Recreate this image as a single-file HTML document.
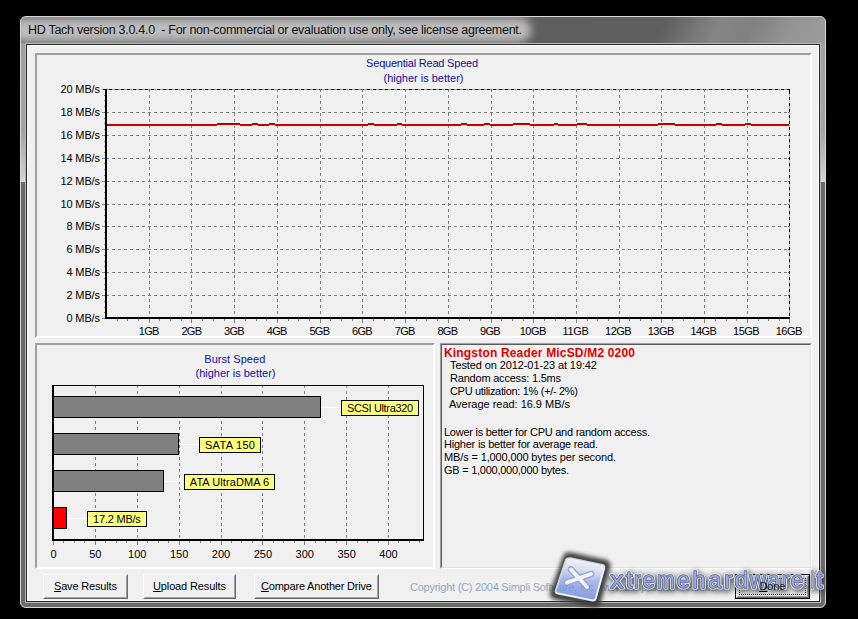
<!DOCTYPE html>
<html><head><meta charset="utf-8"><style>
html,body{margin:0;padding:0;}
body{width:858px;height:619px;background:#000;position:relative;overflow:hidden;font-family:"Liberation Sans",sans-serif;}
div{position:absolute;box-sizing:content-box;}
.t{white-space:pre;}
</style></head><body>
<div style="left:20px;top:16px;width:806px;height:592px;border-radius:6px;background:#6a6a6a;"></div>
<div style="left:21px;top:17px;width:804px;height:165px;border-radius:5px 5px 0 0;background:linear-gradient(180deg,#a0a0a0 0%,#a4a4a4 70%,#cfcfcf 97%,#d8d8d8 100%);"></div>
<div style="left:21px;top:17px;width:804px;height:26px;border-radius:5px 5px 0 0;overflow:hidden;background:linear-gradient(115deg,#606060 0%,#5e5e5e 79%,#858585 86%,#808080 90%,#949494 95%,#9c9c9c 100%);"><div style="left:-6px;top:0px;width:516px;height:26px;border-radius:8px 14px 14px 8px;background:linear-gradient(180deg,#a8a8a8 0%,#c4c4c4 45%,#bdbdbd 70%,#a2a2a2 100%);filter:blur(4px);"></div></div>
<div style="left:20px;top:16px;width:804px;height:590px;border-radius:6px;border:1px solid rgba(235,235,235,0.85);"></div>
<div style="left:25px;top:43px;width:794px;height:558px;border:1px solid #b8b8b8;"></div>
<div style="left:26px;top:44px;width:792px;height:556px;border:1px solid #2b2b2b;"></div>
<div style="left:27px;top:45px;width:790px;height:554px;border:1px solid #fff;background:#f0f0f0;"></div>
<div class="t" style="top:24.22px;font-size:12.5px;line-height:12.5px;color:#101010;letter-spacing:-0.277px;left:28px;">HD Tach version 3.0.4.0&nbsp; - For non-commercial or evaluation use only, see license agreement.</div>
<div style="left:35px;top:53px;width:773px;height:281px;border-style:solid;border-width:2px;border-color:#a0a0a0 #fff #fff #a0a0a0;"></div>
<div class="t" style="top:58.26px;font-size:11px;line-height:11px;color:#1010a0;letter-spacing:-0.211px;left:221.99px;width:400px;text-align:center;">Sequential Read Speed</div>
<div class="t" style="top:72.76px;font-size:11px;line-height:11px;color:#1010a0;letter-spacing:-0.006px;left:223.50px;width:400px;text-align:center;">(higher is better)</div>
<div style="left:102px;top:295px;width:3px;height:1px;background:#808080"></div>
<div style="left:107px;top:295px;width:682px;height:1px;background:repeating-linear-gradient(90deg,#808080 0 3px,transparent 3px 6px);background-position:-1px 0"></div>
<div style="left:102px;top:272px;width:3px;height:1px;background:#808080"></div>
<div style="left:107px;top:272px;width:682px;height:1px;background:repeating-linear-gradient(90deg,#808080 0 3px,transparent 3px 6px);background-position:-1px 0"></div>
<div style="left:102px;top:249px;width:3px;height:1px;background:#808080"></div>
<div style="left:107px;top:249px;width:682px;height:1px;background:repeating-linear-gradient(90deg,#808080 0 3px,transparent 3px 6px);background-position:-1px 0"></div>
<div style="left:102px;top:226px;width:3px;height:1px;background:#808080"></div>
<div style="left:107px;top:226px;width:682px;height:1px;background:repeating-linear-gradient(90deg,#808080 0 3px,transparent 3px 6px);background-position:-1px 0"></div>
<div style="left:102px;top:204px;width:3px;height:1px;background:#808080"></div>
<div style="left:107px;top:204px;width:682px;height:1px;background:repeating-linear-gradient(90deg,#808080 0 3px,transparent 3px 6px);background-position:-1px 0"></div>
<div style="left:102px;top:181px;width:3px;height:1px;background:#808080"></div>
<div style="left:107px;top:181px;width:682px;height:1px;background:repeating-linear-gradient(90deg,#808080 0 3px,transparent 3px 6px);background-position:-1px 0"></div>
<div style="left:102px;top:158px;width:3px;height:1px;background:#808080"></div>
<div style="left:107px;top:158px;width:682px;height:1px;background:repeating-linear-gradient(90deg,#808080 0 3px,transparent 3px 6px);background-position:-1px 0"></div>
<div style="left:102px;top:135px;width:3px;height:1px;background:#808080"></div>
<div style="left:107px;top:135px;width:682px;height:1px;background:repeating-linear-gradient(90deg,#808080 0 3px,transparent 3px 6px);background-position:-1px 0"></div>
<div style="left:102px;top:112px;width:3px;height:1px;background:#808080"></div>
<div style="left:107px;top:112px;width:682px;height:1px;background:repeating-linear-gradient(90deg,#808080 0 3px,transparent 3px 6px);background-position:-1px 0"></div>
<div style="left:102px;top:89px;width:688px;height:1px;background:repeating-linear-gradient(90deg,#000 0 3px,#9a9a9a 3px 6px);background-position:1px 0"></div>
<div style="left:149px;top:89px;width:1px;height:228px;background:repeating-linear-gradient(180deg,#808080 0 3px,transparent 3px 6px);"></div>
<div style="left:149px;top:319px;width:1px;height:4px;background:#808080"></div>
<div style="left:191px;top:89px;width:1px;height:228px;background:repeating-linear-gradient(180deg,#808080 0 3px,transparent 3px 6px);"></div>
<div style="left:191px;top:319px;width:1px;height:4px;background:#808080"></div>
<div style="left:234px;top:89px;width:1px;height:228px;background:repeating-linear-gradient(180deg,#808080 0 3px,transparent 3px 6px);"></div>
<div style="left:234px;top:319px;width:1px;height:4px;background:#808080"></div>
<div style="left:277px;top:89px;width:1px;height:228px;background:repeating-linear-gradient(180deg,#808080 0 3px,transparent 3px 6px);"></div>
<div style="left:277px;top:319px;width:1px;height:4px;background:#808080"></div>
<div style="left:320px;top:89px;width:1px;height:228px;background:repeating-linear-gradient(180deg,#808080 0 3px,transparent 3px 6px);"></div>
<div style="left:320px;top:319px;width:1px;height:4px;background:#808080"></div>
<div style="left:362px;top:89px;width:1px;height:228px;background:repeating-linear-gradient(180deg,#808080 0 3px,transparent 3px 6px);"></div>
<div style="left:362px;top:319px;width:1px;height:4px;background:#808080"></div>
<div style="left:405px;top:89px;width:1px;height:228px;background:repeating-linear-gradient(180deg,#808080 0 3px,transparent 3px 6px);"></div>
<div style="left:405px;top:319px;width:1px;height:4px;background:#808080"></div>
<div style="left:448px;top:89px;width:1px;height:228px;background:repeating-linear-gradient(180deg,#808080 0 3px,transparent 3px 6px);"></div>
<div style="left:448px;top:319px;width:1px;height:4px;background:#808080"></div>
<div style="left:491px;top:89px;width:1px;height:228px;background:repeating-linear-gradient(180deg,#808080 0 3px,transparent 3px 6px);"></div>
<div style="left:491px;top:319px;width:1px;height:4px;background:#808080"></div>
<div style="left:533px;top:89px;width:1px;height:228px;background:repeating-linear-gradient(180deg,#808080 0 3px,transparent 3px 6px);"></div>
<div style="left:533px;top:319px;width:1px;height:4px;background:#808080"></div>
<div style="left:576px;top:89px;width:1px;height:228px;background:repeating-linear-gradient(180deg,#808080 0 3px,transparent 3px 6px);"></div>
<div style="left:576px;top:319px;width:1px;height:4px;background:#808080"></div>
<div style="left:619px;top:89px;width:1px;height:228px;background:repeating-linear-gradient(180deg,#808080 0 3px,transparent 3px 6px);"></div>
<div style="left:619px;top:319px;width:1px;height:4px;background:#808080"></div>
<div style="left:661px;top:89px;width:1px;height:228px;background:repeating-linear-gradient(180deg,#808080 0 3px,transparent 3px 6px);"></div>
<div style="left:661px;top:319px;width:1px;height:4px;background:#808080"></div>
<div style="left:704px;top:89px;width:1px;height:228px;background:repeating-linear-gradient(180deg,#808080 0 3px,transparent 3px 6px);"></div>
<div style="left:704px;top:319px;width:1px;height:4px;background:#808080"></div>
<div style="left:747px;top:89px;width:1px;height:228px;background:repeating-linear-gradient(180deg,#808080 0 3px,transparent 3px 6px);"></div>
<div style="left:747px;top:319px;width:1px;height:4px;background:#808080"></div>
<div style="left:789px;top:319px;width:1px;height:4px;background:#808080"></div>
<div style="left:117px;top:319px;width:1px;height:2px;background:#808080"></div>
<div style="left:127px;top:319px;width:1px;height:2px;background:#808080"></div>
<div style="left:138px;top:319px;width:1px;height:2px;background:#808080"></div>
<div style="left:159px;top:319px;width:1px;height:2px;background:#808080"></div>
<div style="left:170px;top:319px;width:1px;height:2px;background:#808080"></div>
<div style="left:181px;top:319px;width:1px;height:2px;background:#808080"></div>
<div style="left:202px;top:319px;width:1px;height:2px;background:#808080"></div>
<div style="left:213px;top:319px;width:1px;height:2px;background:#808080"></div>
<div style="left:224px;top:319px;width:1px;height:2px;background:#808080"></div>
<div style="left:245px;top:319px;width:1px;height:2px;background:#808080"></div>
<div style="left:256px;top:319px;width:1px;height:2px;background:#808080"></div>
<div style="left:266px;top:319px;width:1px;height:2px;background:#808080"></div>
<div style="left:288px;top:319px;width:1px;height:2px;background:#808080"></div>
<div style="left:298px;top:319px;width:1px;height:2px;background:#808080"></div>
<div style="left:309px;top:319px;width:1px;height:2px;background:#808080"></div>
<div style="left:330px;top:319px;width:1px;height:2px;background:#808080"></div>
<div style="left:341px;top:319px;width:1px;height:2px;background:#808080"></div>
<div style="left:352px;top:319px;width:1px;height:2px;background:#808080"></div>
<div style="left:373px;top:319px;width:1px;height:2px;background:#808080"></div>
<div style="left:384px;top:319px;width:1px;height:2px;background:#808080"></div>
<div style="left:394px;top:319px;width:1px;height:2px;background:#808080"></div>
<div style="left:416px;top:319px;width:1px;height:2px;background:#808080"></div>
<div style="left:426px;top:319px;width:1px;height:2px;background:#808080"></div>
<div style="left:437px;top:319px;width:1px;height:2px;background:#808080"></div>
<div style="left:459px;top:319px;width:1px;height:2px;background:#808080"></div>
<div style="left:469px;top:319px;width:1px;height:2px;background:#808080"></div>
<div style="left:480px;top:319px;width:1px;height:2px;background:#808080"></div>
<div style="left:501px;top:319px;width:1px;height:2px;background:#808080"></div>
<div style="left:512px;top:319px;width:1px;height:2px;background:#808080"></div>
<div style="left:523px;top:319px;width:1px;height:2px;background:#808080"></div>
<div style="left:544px;top:319px;width:1px;height:2px;background:#808080"></div>
<div style="left:555px;top:319px;width:1px;height:2px;background:#808080"></div>
<div style="left:565px;top:319px;width:1px;height:2px;background:#808080"></div>
<div style="left:587px;top:319px;width:1px;height:2px;background:#808080"></div>
<div style="left:597px;top:319px;width:1px;height:2px;background:#808080"></div>
<div style="left:608px;top:319px;width:1px;height:2px;background:#808080"></div>
<div style="left:629px;top:319px;width:1px;height:2px;background:#808080"></div>
<div style="left:640px;top:319px;width:1px;height:2px;background:#808080"></div>
<div style="left:651px;top:319px;width:1px;height:2px;background:#808080"></div>
<div style="left:672px;top:319px;width:1px;height:2px;background:#808080"></div>
<div style="left:683px;top:319px;width:1px;height:2px;background:#808080"></div>
<div style="left:694px;top:319px;width:1px;height:2px;background:#808080"></div>
<div style="left:715px;top:319px;width:1px;height:2px;background:#808080"></div>
<div style="left:726px;top:319px;width:1px;height:2px;background:#808080"></div>
<div style="left:736px;top:319px;width:1px;height:2px;background:#808080"></div>
<div style="left:758px;top:319px;width:1px;height:2px;background:#808080"></div>
<div style="left:768px;top:319px;width:1px;height:2px;background:#808080"></div>
<div style="left:779px;top:319px;width:1px;height:2px;background:#808080"></div>
<div style="left:104px;top:312px;width:1px;height:1px;background:#808080"></div>
<div style="left:104px;top:307px;width:1px;height:1px;background:#808080"></div>
<div style="left:104px;top:301px;width:1px;height:1px;background:#808080"></div>
<div style="left:104px;top:289px;width:1px;height:1px;background:#808080"></div>
<div style="left:104px;top:284px;width:1px;height:1px;background:#808080"></div>
<div style="left:104px;top:278px;width:1px;height:1px;background:#808080"></div>
<div style="left:104px;top:266px;width:1px;height:1px;background:#808080"></div>
<div style="left:104px;top:261px;width:1px;height:1px;background:#808080"></div>
<div style="left:104px;top:255px;width:1px;height:1px;background:#808080"></div>
<div style="left:104px;top:244px;width:1px;height:1px;background:#808080"></div>
<div style="left:104px;top:238px;width:1px;height:1px;background:#808080"></div>
<div style="left:104px;top:232px;width:1px;height:1px;background:#808080"></div>
<div style="left:104px;top:221px;width:1px;height:1px;background:#808080"></div>
<div style="left:104px;top:215px;width:1px;height:1px;background:#808080"></div>
<div style="left:104px;top:209px;width:1px;height:1px;background:#808080"></div>
<div style="left:104px;top:198px;width:1px;height:1px;background:#808080"></div>
<div style="left:104px;top:192px;width:1px;height:1px;background:#808080"></div>
<div style="left:104px;top:186px;width:1px;height:1px;background:#808080"></div>
<div style="left:104px;top:175px;width:1px;height:1px;background:#808080"></div>
<div style="left:104px;top:169px;width:1px;height:1px;background:#808080"></div>
<div style="left:104px;top:163px;width:1px;height:1px;background:#808080"></div>
<div style="left:104px;top:152px;width:1px;height:1px;background:#808080"></div>
<div style="left:104px;top:146px;width:1px;height:1px;background:#808080"></div>
<div style="left:104px;top:141px;width:1px;height:1px;background:#808080"></div>
<div style="left:104px;top:129px;width:1px;height:1px;background:#808080"></div>
<div style="left:104px;top:123px;width:1px;height:1px;background:#808080"></div>
<div style="left:104px;top:118px;width:1px;height:1px;background:#808080"></div>
<div style="left:104px;top:106px;width:1px;height:1px;background:#808080"></div>
<div style="left:104px;top:100px;width:1px;height:1px;background:#808080"></div>
<div style="left:104px;top:95px;width:1px;height:1px;background:#808080"></div>
<div style="left:789px;top:89px;width:1px;height:230px;background:repeating-linear-gradient(180deg,#000 0 3px,#b0b0b0 3px 6px);background-position:0 2px;"></div>
<div style="left:105px;top:89px;width:2px;height:230px;background:#000"></div>
<div style="left:102px;top:318px;width:3px;height:1px;background:#808080"></div>
<div style="left:105px;top:317px;width:685px;height:2px;background:#000"></div>
<div class="t" style="top:313.26px;font-size:11px;line-height:11px;color:#000;letter-spacing:-0.147px;left:39.85px;width:60px;text-align:right;">0 MB/s</div>
<div class="t" style="top:290.26px;font-size:11px;line-height:11px;color:#000;letter-spacing:-0.147px;left:39.85px;width:60px;text-align:right;">2 MB/s</div>
<div class="t" style="top:267.26px;font-size:11px;line-height:11px;color:#000;letter-spacing:-0.147px;left:39.85px;width:60px;text-align:right;">4 MB/s</div>
<div class="t" style="top:244.26px;font-size:11px;line-height:11px;color:#000;letter-spacing:-0.147px;left:39.85px;width:60px;text-align:right;">6 MB/s</div>
<div class="t" style="top:221.26px;font-size:11px;line-height:11px;color:#000;letter-spacing:-0.147px;left:39.85px;width:60px;text-align:right;">8 MB/s</div>
<div class="t" style="top:199.26px;font-size:11px;line-height:11px;color:#000;letter-spacing:-0.143px;left:39.86px;width:60px;text-align:right;">10 MB/s</div>
<div class="t" style="top:176.26px;font-size:11px;line-height:11px;color:#000;letter-spacing:-0.143px;left:39.86px;width:60px;text-align:right;">12 MB/s</div>
<div class="t" style="top:153.26px;font-size:11px;line-height:11px;color:#000;letter-spacing:-0.143px;left:39.86px;width:60px;text-align:right;">14 MB/s</div>
<div class="t" style="top:130.26px;font-size:11px;line-height:11px;color:#000;letter-spacing:-0.143px;left:39.86px;width:60px;text-align:right;">16 MB/s</div>
<div class="t" style="top:107.26px;font-size:11px;line-height:11px;color:#000;letter-spacing:-0.143px;left:39.86px;width:60px;text-align:right;">18 MB/s</div>
<div class="t" style="top:84.26px;font-size:11px;line-height:11px;color:#000;letter-spacing:-0.143px;left:39.86px;width:60px;text-align:right;">20 MB/s</div>
<div class="t" style="top:326.06px;font-size:11px;line-height:11px;color:#000;letter-spacing:-0.708px;left:118.75px;width:60px;text-align:center;">1GB</div>
<div class="t" style="top:326.06px;font-size:11px;line-height:11px;color:#000;letter-spacing:-0.708px;left:161.41px;width:60px;text-align:center;">2GB</div>
<div class="t" style="top:326.06px;font-size:11px;line-height:11px;color:#000;letter-spacing:-0.708px;left:204.07px;width:60px;text-align:center;">3GB</div>
<div class="t" style="top:326.06px;font-size:11px;line-height:11px;color:#000;letter-spacing:-0.708px;left:246.73px;width:60px;text-align:center;">4GB</div>
<div class="t" style="top:326.06px;font-size:11px;line-height:11px;color:#000;letter-spacing:-0.708px;left:289.39px;width:60px;text-align:center;">5GB</div>
<div class="t" style="top:326.06px;font-size:11px;line-height:11px;color:#000;letter-spacing:-0.708px;left:332.05px;width:60px;text-align:center;">6GB</div>
<div class="t" style="top:326.06px;font-size:11px;line-height:11px;color:#000;letter-spacing:-0.708px;left:374.71px;width:60px;text-align:center;">7GB</div>
<div class="t" style="top:326.06px;font-size:11px;line-height:11px;color:#000;letter-spacing:-0.708px;left:417.37px;width:60px;text-align:center;">8GB</div>
<div class="t" style="top:326.06px;font-size:11px;line-height:11px;color:#000;letter-spacing:-0.708px;left:460.03px;width:60px;text-align:center;">9GB</div>
<div class="t" style="top:326.06px;font-size:11px;line-height:11px;color:#000;letter-spacing:-0.547px;left:502.77px;width:60px;text-align:center;">10GB</div>
<div class="t" style="top:326.06px;font-size:11px;line-height:11px;color:#000;letter-spacing:-0.271px;left:545.56px;width:60px;text-align:center;">11GB</div>
<div class="t" style="top:326.06px;font-size:11px;line-height:11px;color:#000;letter-spacing:-0.547px;left:588.09px;width:60px;text-align:center;">12GB</div>
<div class="t" style="top:326.06px;font-size:11px;line-height:11px;color:#000;letter-spacing:-0.547px;left:630.75px;width:60px;text-align:center;">13GB</div>
<div class="t" style="top:326.06px;font-size:11px;line-height:11px;color:#000;letter-spacing:-0.547px;left:673.41px;width:60px;text-align:center;">14GB</div>
<div class="t" style="top:326.06px;font-size:11px;line-height:11px;color:#000;letter-spacing:-0.547px;left:716.07px;width:60px;text-align:center;">15GB</div>
<div class="t" style="top:326.06px;font-size:11px;line-height:11px;color:#000;letter-spacing:-0.547px;left:758.73px;width:60px;text-align:center;">16GB</div>
<div style="left:107px;top:124px;width:682px;height:2px;background:#c80000"></div>
<div style="left:217px;top:123px;width:23px;height:1px;background:#a40000"></div>
<div style="left:217px;top:125px;width:23px;height:1px;background:#f0f0f0"></div>
<div style="left:252px;top:123px;width:6px;height:1px;background:#a40000"></div>
<div style="left:252px;top:125px;width:6px;height:1px;background:#f0f0f0"></div>
<div style="left:269px;top:123px;width:6px;height:1px;background:#a40000"></div>
<div style="left:269px;top:125px;width:6px;height:1px;background:#f0f0f0"></div>
<div style="left:368px;top:123px;width:6px;height:1px;background:#a40000"></div>
<div style="left:368px;top:125px;width:6px;height:1px;background:#f0f0f0"></div>
<div style="left:397px;top:123px;width:5px;height:1px;background:#a40000"></div>
<div style="left:397px;top:125px;width:5px;height:1px;background:#f0f0f0"></div>
<div style="left:461px;top:123px;width:6px;height:1px;background:#a40000"></div>
<div style="left:461px;top:125px;width:6px;height:1px;background:#f0f0f0"></div>
<div style="left:484px;top:123px;width:6px;height:1px;background:#a40000"></div>
<div style="left:484px;top:125px;width:6px;height:1px;background:#f0f0f0"></div>
<div style="left:513px;top:123px;width:17px;height:1px;background:#a40000"></div>
<div style="left:513px;top:125px;width:17px;height:1px;background:#f0f0f0"></div>
<div style="left:554px;top:123px;width:4px;height:1px;background:#a40000"></div>
<div style="left:554px;top:125px;width:4px;height:1px;background:#f0f0f0"></div>
<div style="left:577px;top:123px;width:10px;height:1px;background:#a40000"></div>
<div style="left:577px;top:125px;width:10px;height:1px;background:#f0f0f0"></div>
<div style="left:658px;top:123px;width:17px;height:1px;background:#a40000"></div>
<div style="left:658px;top:125px;width:17px;height:1px;background:#f0f0f0"></div>
<div style="left:716px;top:123px;width:6px;height:1px;background:#a40000"></div>
<div style="left:716px;top:125px;width:6px;height:1px;background:#f0f0f0"></div>
<div style="left:745px;top:123px;width:6px;height:1px;background:#a40000"></div>
<div style="left:745px;top:125px;width:6px;height:1px;background:#f0f0f0"></div>
<div style="left:35px;top:343px;width:396px;height:222px;border-style:solid;border-width:2px;border-color:#a0a0a0 #fff #fff #a0a0a0;"></div>
<div class="t" style="top:354.26px;font-size:11px;line-height:11px;color:#1010a0;letter-spacing:0.045px;left:34.82px;width:400px;text-align:center;">Burst Speed</div>
<div class="t" style="top:368.26px;font-size:11px;line-height:11px;color:#1010a0;letter-spacing:-0.006px;left:35.50px;width:400px;text-align:center;">(higher is better)</div>
<div style="left:95px;top:385px;width:1px;height:154px;background:repeating-linear-gradient(180deg,#808080 0 3px,transparent 3px 6px);"></div>
<div style="left:137px;top:385px;width:1px;height:154px;background:repeating-linear-gradient(180deg,#808080 0 3px,transparent 3px 6px);"></div>
<div style="left:179px;top:385px;width:1px;height:154px;background:repeating-linear-gradient(180deg,#808080 0 3px,transparent 3px 6px);"></div>
<div style="left:221px;top:385px;width:1px;height:154px;background:repeating-linear-gradient(180deg,#808080 0 3px,transparent 3px 6px);"></div>
<div style="left:262px;top:385px;width:1px;height:154px;background:repeating-linear-gradient(180deg,#808080 0 3px,transparent 3px 6px);"></div>
<div style="left:304px;top:385px;width:1px;height:154px;background:repeating-linear-gradient(180deg,#808080 0 3px,transparent 3px 6px);"></div>
<div style="left:346px;top:385px;width:1px;height:154px;background:repeating-linear-gradient(180deg,#808080 0 3px,transparent 3px 6px);"></div>
<div style="left:388px;top:385px;width:1px;height:154px;background:repeating-linear-gradient(180deg,#808080 0 3px,transparent 3px 6px);"></div>
<div style="left:52px;top:385px;width:369px;height:153px;border-style:solid;border-color:#000;border-width:1px 1px 2px 2px;"></div>
<div style="left:53px;top:541px;width:1px;height:4px;background:#808080"></div>
<div style="left:63px;top:541px;width:1px;height:2px;background:#808080"></div>
<div style="left:74px;top:541px;width:1px;height:2px;background:#808080"></div>
<div style="left:84px;top:541px;width:1px;height:2px;background:#808080"></div>
<div style="left:95px;top:541px;width:1px;height:4px;background:#808080"></div>
<div style="left:105px;top:541px;width:1px;height:2px;background:#808080"></div>
<div style="left:116px;top:541px;width:1px;height:2px;background:#808080"></div>
<div style="left:126px;top:541px;width:1px;height:2px;background:#808080"></div>
<div style="left:137px;top:541px;width:1px;height:4px;background:#808080"></div>
<div style="left:147px;top:541px;width:1px;height:2px;background:#808080"></div>
<div style="left:158px;top:541px;width:1px;height:2px;background:#808080"></div>
<div style="left:168px;top:541px;width:1px;height:2px;background:#808080"></div>
<div style="left:179px;top:541px;width:1px;height:4px;background:#808080"></div>
<div style="left:189px;top:541px;width:1px;height:2px;background:#808080"></div>
<div style="left:200px;top:541px;width:1px;height:2px;background:#808080"></div>
<div style="left:210px;top:541px;width:1px;height:2px;background:#808080"></div>
<div style="left:221px;top:541px;width:1px;height:4px;background:#808080"></div>
<div style="left:231px;top:541px;width:1px;height:2px;background:#808080"></div>
<div style="left:241px;top:541px;width:1px;height:2px;background:#808080"></div>
<div style="left:252px;top:541px;width:1px;height:2px;background:#808080"></div>
<div style="left:262px;top:541px;width:1px;height:4px;background:#808080"></div>
<div style="left:273px;top:541px;width:1px;height:2px;background:#808080"></div>
<div style="left:283px;top:541px;width:1px;height:2px;background:#808080"></div>
<div style="left:294px;top:541px;width:1px;height:2px;background:#808080"></div>
<div style="left:304px;top:541px;width:1px;height:4px;background:#808080"></div>
<div style="left:315px;top:541px;width:1px;height:2px;background:#808080"></div>
<div style="left:325px;top:541px;width:1px;height:2px;background:#808080"></div>
<div style="left:336px;top:541px;width:1px;height:2px;background:#808080"></div>
<div style="left:346px;top:541px;width:1px;height:4px;background:#808080"></div>
<div style="left:357px;top:541px;width:1px;height:2px;background:#808080"></div>
<div style="left:367px;top:541px;width:1px;height:2px;background:#808080"></div>
<div style="left:378px;top:541px;width:1px;height:2px;background:#808080"></div>
<div style="left:388px;top:541px;width:1px;height:4px;background:#808080"></div>
<div style="left:398px;top:541px;width:1px;height:2px;background:#808080"></div>
<div style="left:409px;top:541px;width:1px;height:2px;background:#808080"></div>
<div style="left:419px;top:541px;width:1px;height:2px;background:#808080"></div>
<div class="t" style="top:549.26px;font-size:11px;line-height:11px;color:#000;left:33.50px;width:40px;text-align:center;">0</div>
<div class="t" style="top:549.26px;font-size:11px;line-height:11px;color:#000;left:75.38px;width:40px;text-align:center;">50</div>
<div class="t" style="top:549.26px;font-size:11px;line-height:11px;color:#000;left:117.25px;width:40px;text-align:center;">100</div>
<div class="t" style="top:549.26px;font-size:11px;line-height:11px;color:#000;left:159.12px;width:40px;text-align:center;">150</div>
<div class="t" style="top:549.26px;font-size:11px;line-height:11px;color:#000;left:201.00px;width:40px;text-align:center;">200</div>
<div class="t" style="top:549.26px;font-size:11px;line-height:11px;color:#000;left:242.88px;width:40px;text-align:center;">250</div>
<div class="t" style="top:549.26px;font-size:11px;line-height:11px;color:#000;left:284.75px;width:40px;text-align:center;">300</div>
<div class="t" style="top:549.26px;font-size:11px;line-height:11px;color:#000;left:326.62px;width:40px;text-align:center;">350</div>
<div class="t" style="top:549.26px;font-size:11px;line-height:11px;color:#000;left:368.50px;width:40px;text-align:center;">400</div>
<div style="left:54px;top:396px;width:266px;height:20px;background:#808080;border:1px solid #000;border-left:0"></div>
<div style="left:321px;top:407px;width:20px;height:1px;background:#fff"></div>
<div style="left:341px;top:400px;width:76px;height:14px;background:#ffff80;border:1px solid #000"></div>
<div class="t" style="top:403.26px;font-size:11px;line-height:11px;color:#000;letter-spacing:-0.343px;left:340.83px;width:78px;text-align:center;">SCSI Ultra320</div>
<div style="left:54px;top:433px;width:124px;height:20px;background:#808080;border:1px solid #000;border-left:0"></div>
<div style="left:179px;top:444px;width:20px;height:1px;background:#fff"></div>
<div style="left:199px;top:437px;width:60px;height:14px;background:#ffff80;border:1px solid #000"></div>
<div class="t" style="top:440.26px;font-size:11px;line-height:11px;color:#000;letter-spacing:0.299px;left:199.15px;width:62px;text-align:center;">SATA 150</div>
<div style="left:54px;top:470px;width:109px;height:20px;background:#808080;border:1px solid #000;border-left:0"></div>
<div style="left:164px;top:481px;width:20px;height:1px;background:#fff"></div>
<div style="left:184px;top:474px;width:89px;height:14px;background:#ffff80;border:1px solid #000"></div>
<div class="t" style="top:477.26px;font-size:11px;line-height:11px;color:#000;letter-spacing:0.073px;left:184.04px;width:91px;text-align:center;">ATA UltraDMA 6</div>
<div style="left:54px;top:507px;width:12px;height:20px;background:#ff0000;border:1px solid #000;border-left:0"></div>
<div style="left:67px;top:518px;width:20px;height:1px;background:#fff"></div>
<div style="left:87px;top:511px;width:58px;height:14px;background:#ffff80;border:1px solid #000"></div>
<div class="t" style="top:514.26px;font-size:11px;line-height:11px;color:#000;letter-spacing:-0.216px;left:86.89px;width:60px;text-align:center;">17.2 MB/s</div>
<div style="left:440px;top:343px;width:370px;height:224px;border-style:solid;border-width:1px;border-color:#a0a0a0 #fff #fff #a0a0a0;"></div>
<div style="left:441px;top:344px;width:368px;height:222px;border-style:solid;border-width:1px;border-color:#5a5a5a #e3e3e3 #e3e3e3 #5a5a5a;"></div>
<div class="t" style="top:347.30px;font-size:12px;line-height:12px;color:#e00000;font-weight:bold;letter-spacing:0.176px;left:444px;">Kingston Reader MicSD/M2 0200</div>
<div class="t" style="top:360.26px;font-size:11px;line-height:11px;color:#000;letter-spacing:-0.102px;left:450px;">Tested on 2012-01-23 at 19:42</div>
<div class="t" style="top:373.26px;font-size:11px;line-height:11px;color:#000;letter-spacing:-0.207px;left:450px;">Random access: 1.5ms</div>
<div class="t" style="top:386.26px;font-size:11px;line-height:11px;color:#000;letter-spacing:-0.320px;left:450px;">CPU utilization: 1% (+/- 2%)</div>
<div class="t" style="top:399.26px;font-size:11px;line-height:11px;color:#000;letter-spacing:-0.022px;left:449px;">Average read: 16.9 MB/s</div>
<div class="t" style="top:426.76px;font-size:11px;line-height:11px;color:#000;letter-spacing:-0.255px;left:444px;">Lower is better for CPU and random access.</div>
<div class="t" style="top:439.46px;font-size:11px;line-height:11px;color:#000;letter-spacing:-0.225px;left:444px;">Higher is better for average read.</div>
<div class="t" style="top:452.16px;font-size:11px;line-height:11px;color:#000;letter-spacing:-0.134px;left:444px;">MB/s = 1,000,000 bytes per second.</div>
<div class="t" style="top:464.86px;font-size:11px;line-height:11px;color:#000;letter-spacing:-0.258px;left:444px;">GB = 1,000,000,000 bytes.</div>
<div style="left:43px;top:574px;width:83px;height:23px;border-style:solid;border-width:1px;border-color:#fff #696969 #696969 #fff;background:#f0f0f0"></div>
<div style="left:44px;top:575px;width:81px;height:21px;border-style:solid;border-width:1px;border-color:#f0f0f0 #a0a0a0 #a0a0a0 #f0f0f0"></div>
<div class="t" style="top:580.86px;font-size:11px;line-height:11px;color:#000;letter-spacing:-0.165px;left:42.92px;width:85px;text-align:center;"><u>S</u>ave Results</div>
<div style="left:143px;top:574px;width:91px;height:23px;border-style:solid;border-width:1px;border-color:#fff #696969 #696969 #fff;background:#f0f0f0"></div>
<div style="left:144px;top:575px;width:89px;height:21px;border-style:solid;border-width:1px;border-color:#f0f0f0 #a0a0a0 #a0a0a0 #f0f0f0"></div>
<div class="t" style="top:580.86px;font-size:11px;line-height:11px;color:#000;letter-spacing:-0.123px;left:142.94px;width:93px;text-align:center;"><u>U</u>pload Results</div>
<div style="left:254px;top:574px;width:123px;height:23px;border-style:solid;border-width:1px;border-color:#fff #696969 #696969 #fff;background:#f0f0f0"></div>
<div style="left:255px;top:575px;width:121px;height:21px;border-style:solid;border-width:1px;border-color:#f0f0f0 #a0a0a0 #a0a0a0 #f0f0f0"></div>
<div class="t" style="top:580.86px;font-size:11px;line-height:11px;color:#000;letter-spacing:-0.198px;left:253.90px;width:125px;text-align:center;"><u>C</u>ompare Another Drive</div>
<div style="left:735px;top:574px;width:73px;height:23px;border:1px solid #000;background:#f0f0f0"></div>
<div style="left:736px;top:575px;width:71px;height:21px;border-style:solid;border-width:1px;border-color:#fff #696969 #696969 #fff"></div>
<div style="left:737px;top:576px;width:69px;height:19px;border-style:solid;border-width:1px;border-color:#f0f0f0 #a0a0a0 #a0a0a0 #f0f0f0"></div>
<div class="t" style="top:580.86px;font-size:11px;line-height:11px;color:#000;letter-spacing:-0.099px;left:734.95px;width:75px;text-align:center;"><u>D</u>one</div>
<div style="left:739px;top:578px;width:65px;height:15px;border:1px dotted #000"></div>
<div class="t" style="top:582.26px;font-size:11px;line-height:11px;color:#94a8c4;letter-spacing:-0.244px;left:410px;">Copyright (C) 2004 Simpli Software, Inc. www.simplisoftware.com</div>
<svg style="position:absolute;left:0;top:0" width="858" height="619" viewBox="0 0 858 619">
<defs>
<linearGradient id="lg" x1="0.45" y1="0" x2="0.3" y2="1">
<stop offset="0" stop-color="#f4f6fb"/><stop offset="0.22" stop-color="#d8e0f4"/><stop offset="0.5" stop-color="#95aae8"/><stop offset="1" stop-color="#6280dc"/></linearGradient>
<filter id="sh" x="-50%" y="-50%" width="200%" height="200%"><feGaussianBlur stdDeviation="2.3"/></filter>
<filter id="sh2" x="-20%" y="-50%" width="140%" height="200%"><feGaussianBlur stdDeviation="2.8"/></filter>
<mask id="mk" maskUnits="userSpaceOnUse" x="0" y="0" width="858" height="619"><rect x="0" y="0" width="858" height="619" fill="#fff"/><path d="M570.5 558.2 L602.5 564.8 Q605 565.5 604.3 568 L595.8 598.5 Q595 601 592.4 600.5 L557.6 593.5 Q555 593 555.7 590.4 L565.7 560.5 Q566.5 557.5 570.5 558.2Z" fill="#000"/></mask>
</defs>
<path d="M568.3 557.7 L604.1 565.1 L594.5 600.8 L555.2 593 Z" fill="#383838" stroke="#383838" stroke-width="12" stroke-linejoin="round" opacity="0.95" filter="url(#sh)" transform="translate(0.5,0.5)" mask="url(#mk)"/>
<g opacity="0.78">
<path d="M570.5 558.2 L602.5 564.8 Q605 565.5 604.3 568 L595.8 598.5 Q595 601 592.4 600.5 L557.6 593.5 Q555 593 555.7 590.4 L565.7 560.5 Q566.5 557.5 570.5 558.2Z" fill="url(#lg)" stroke="#f6f8fc" stroke-width="1.8"/>
<path d="M571 569.5 L587 587 M591 574 L567 582.5" stroke="#8090c8" stroke-width="6.5" stroke-linecap="round"/>
<path d="M571 569.5 L587 587 M591 574 L567 582.5" stroke="#f4f6ff" stroke-width="3.8" stroke-linecap="round"/>
</g>
<g font-family="Liberation Sans" font-size="24.5">
<g opacity="0.7" filter="url(#sh2)"><text x="611.3" y="590" textLength="13.2" lengthAdjust="spacingAndGlyphs" fill="#3a3a3a" stroke="#3a3a3a" stroke-width="5">x</text><text x="626.7" y="590" textLength="6.9" lengthAdjust="spacingAndGlyphs" fill="#3a3a3a" stroke="#3a3a3a" stroke-width="5">t</text><text x="635.1" y="590" textLength="6.9" lengthAdjust="spacingAndGlyphs" fill="#3a3a3a" stroke="#3a3a3a" stroke-width="5">r</text><text x="643.4" y="590" textLength="12.5" lengthAdjust="spacingAndGlyphs" fill="#3a3a3a" stroke="#3a3a3a" stroke-width="5">e</text><text x="658.1" y="590" textLength="17.7" lengthAdjust="spacingAndGlyphs" fill="#3a3a3a" stroke="#3a3a3a" stroke-width="5">m</text><text x="677.7" y="590" textLength="13.2" lengthAdjust="spacingAndGlyphs" fill="#3a3a3a" stroke="#3a3a3a" stroke-width="5">e</text><text x="693.4" y="590" textLength="13.2" lengthAdjust="spacingAndGlyphs" fill="#3a3a3a" stroke="#3a3a3a" stroke-width="5">h</text><text x="709.2" y="590" textLength="13.2" lengthAdjust="spacingAndGlyphs" fill="#3a3a3a" stroke="#3a3a3a" stroke-width="5">a</text><text x="724.9" y="590" textLength="8.5" lengthAdjust="spacingAndGlyphs" fill="#3a3a3a" stroke="#3a3a3a" stroke-width="5">r</text><text x="735.4" y="590" textLength="13.8" lengthAdjust="spacingAndGlyphs" fill="#3a3a3a" stroke="#3a3a3a" stroke-width="5">d</text><text x="750.4" y="590" textLength="16.4" lengthAdjust="spacingAndGlyphs" fill="#3a3a3a" stroke="#3a3a3a" stroke-width="5">w</text><text x="768.7" y="590" textLength="11.8" lengthAdjust="spacingAndGlyphs" fill="#3a3a3a" stroke="#3a3a3a" stroke-width="5">a</text><text x="782.8" y="590" textLength="7.6" lengthAdjust="spacingAndGlyphs" fill="#3a3a3a" stroke="#3a3a3a" stroke-width="5">r</text><text x="791.8" y="590" textLength="12.8" lengthAdjust="spacingAndGlyphs" fill="#3a3a3a" stroke="#3a3a3a" stroke-width="5">e</text><text x="806.4" y="590" textLength="1.9" lengthAdjust="spacingAndGlyphs" fill="#3a3a3a" stroke="#3a3a3a" stroke-width="5">.</text><text x="811.7" y="590" textLength="3.4" lengthAdjust="spacingAndGlyphs" fill="#3a3a3a" stroke="#3a3a3a" stroke-width="5">i</text><text x="816.9" y="590" textLength="6.6" lengthAdjust="spacingAndGlyphs" fill="#3a3a3a" stroke="#3a3a3a" stroke-width="5">t</text></g>
<g opacity="0.92"><text x="610.3" y="588" textLength="13.2" lengthAdjust="spacingAndGlyphs" fill="none" stroke="#f4f6fc" stroke-width="3.2" stroke-linejoin="round">x</text><text x="625.7" y="588" textLength="6.9" lengthAdjust="spacingAndGlyphs" fill="none" stroke="#f4f6fc" stroke-width="3.2" stroke-linejoin="round">t</text><text x="634.1" y="588" textLength="6.9" lengthAdjust="spacingAndGlyphs" fill="none" stroke="#f4f6fc" stroke-width="3.2" stroke-linejoin="round">r</text><text x="642.4" y="588" textLength="12.5" lengthAdjust="spacingAndGlyphs" fill="none" stroke="#f4f6fc" stroke-width="3.2" stroke-linejoin="round">e</text><text x="657.1" y="588" textLength="17.7" lengthAdjust="spacingAndGlyphs" fill="none" stroke="#f4f6fc" stroke-width="3.2" stroke-linejoin="round">m</text><text x="676.7" y="588" textLength="13.2" lengthAdjust="spacingAndGlyphs" fill="none" stroke="#f4f6fc" stroke-width="3.2" stroke-linejoin="round">e</text><text x="692.4" y="588" textLength="13.2" lengthAdjust="spacingAndGlyphs" fill="none" stroke="#f4f6fc" stroke-width="3.2" stroke-linejoin="round">h</text><text x="708.2" y="588" textLength="13.2" lengthAdjust="spacingAndGlyphs" fill="none" stroke="#f4f6fc" stroke-width="3.2" stroke-linejoin="round">a</text><text x="723.9" y="588" textLength="8.5" lengthAdjust="spacingAndGlyphs" fill="none" stroke="#f4f6fc" stroke-width="3.2" stroke-linejoin="round">r</text><text x="734.4" y="588" textLength="13.8" lengthAdjust="spacingAndGlyphs" fill="none" stroke="#f4f6fc" stroke-width="3.2" stroke-linejoin="round">d</text><text x="749.4" y="588" textLength="16.4" lengthAdjust="spacingAndGlyphs" fill="none" stroke="#f4f6fc" stroke-width="3.2" stroke-linejoin="round">w</text><text x="767.7" y="588" textLength="11.8" lengthAdjust="spacingAndGlyphs" fill="none" stroke="#f4f6fc" stroke-width="3.2" stroke-linejoin="round">a</text><text x="781.8" y="588" textLength="7.6" lengthAdjust="spacingAndGlyphs" fill="none" stroke="#f4f6fc" stroke-width="3.2" stroke-linejoin="round">r</text><text x="790.8" y="588" textLength="12.8" lengthAdjust="spacingAndGlyphs" fill="none" stroke="#f4f6fc" stroke-width="3.2" stroke-linejoin="round">e</text><text x="805.4" y="588" textLength="1.9" lengthAdjust="spacingAndGlyphs" fill="none" stroke="#f4f6fc" stroke-width="3.2" stroke-linejoin="round">.</text><text x="810.7" y="588" textLength="3.4" lengthAdjust="spacingAndGlyphs" fill="none" stroke="#f4f6fc" stroke-width="3.2" stroke-linejoin="round">i</text><text x="815.9" y="588" textLength="6.6" lengthAdjust="spacingAndGlyphs" fill="none" stroke="#f4f6fc" stroke-width="3.2" stroke-linejoin="round">t</text><text x="610.3" y="588" textLength="13.2" lengthAdjust="spacingAndGlyphs" fill="none" stroke="#505c96" stroke-width="1.5" stroke-linejoin="round">x</text><text x="625.7" y="588" textLength="6.9" lengthAdjust="spacingAndGlyphs" fill="none" stroke="#505c96" stroke-width="1.5" stroke-linejoin="round">t</text><text x="634.1" y="588" textLength="6.9" lengthAdjust="spacingAndGlyphs" fill="none" stroke="#505c96" stroke-width="1.5" stroke-linejoin="round">r</text><text x="642.4" y="588" textLength="12.5" lengthAdjust="spacingAndGlyphs" fill="none" stroke="#505c96" stroke-width="1.5" stroke-linejoin="round">e</text><text x="657.1" y="588" textLength="17.7" lengthAdjust="spacingAndGlyphs" fill="none" stroke="#505c96" stroke-width="1.5" stroke-linejoin="round">m</text><text x="676.7" y="588" textLength="13.2" lengthAdjust="spacingAndGlyphs" fill="none" stroke="#505c96" stroke-width="1.5" stroke-linejoin="round">e</text><text x="692.4" y="588" textLength="13.2" lengthAdjust="spacingAndGlyphs" fill="none" stroke="#505c96" stroke-width="1.5" stroke-linejoin="round">h</text><text x="708.2" y="588" textLength="13.2" lengthAdjust="spacingAndGlyphs" fill="none" stroke="#505c96" stroke-width="1.5" stroke-linejoin="round">a</text><text x="723.9" y="588" textLength="8.5" lengthAdjust="spacingAndGlyphs" fill="none" stroke="#505c96" stroke-width="1.5" stroke-linejoin="round">r</text><text x="734.4" y="588" textLength="13.8" lengthAdjust="spacingAndGlyphs" fill="none" stroke="#505c96" stroke-width="1.5" stroke-linejoin="round">d</text><text x="749.4" y="588" textLength="16.4" lengthAdjust="spacingAndGlyphs" fill="none" stroke="#505c96" stroke-width="1.5" stroke-linejoin="round">w</text><text x="767.7" y="588" textLength="11.8" lengthAdjust="spacingAndGlyphs" fill="none" stroke="#505c96" stroke-width="1.5" stroke-linejoin="round">a</text><text x="781.8" y="588" textLength="7.6" lengthAdjust="spacingAndGlyphs" fill="none" stroke="#505c96" stroke-width="1.5" stroke-linejoin="round">r</text><text x="790.8" y="588" textLength="12.8" lengthAdjust="spacingAndGlyphs" fill="none" stroke="#505c96" stroke-width="1.5" stroke-linejoin="round">e</text><text x="805.4" y="588" textLength="1.9" lengthAdjust="spacingAndGlyphs" fill="none" stroke="#505c96" stroke-width="1.5" stroke-linejoin="round">.</text><text x="810.7" y="588" textLength="3.4" lengthAdjust="spacingAndGlyphs" fill="none" stroke="#505c96" stroke-width="1.5" stroke-linejoin="round">i</text><text x="815.9" y="588" textLength="6.6" lengthAdjust="spacingAndGlyphs" fill="none" stroke="#505c96" stroke-width="1.5" stroke-linejoin="round">t</text><text x="610.3" y="588" textLength="13.2" lengthAdjust="spacingAndGlyphs" fill="#a4b3e4" fill-opacity="0.85">x</text><text x="625.7" y="588" textLength="6.9" lengthAdjust="spacingAndGlyphs" fill="#a4b3e4" fill-opacity="0.85">t</text><text x="634.1" y="588" textLength="6.9" lengthAdjust="spacingAndGlyphs" fill="#a4b3e4" fill-opacity="0.85">r</text><text x="642.4" y="588" textLength="12.5" lengthAdjust="spacingAndGlyphs" fill="#a4b3e4" fill-opacity="0.85">e</text><text x="657.1" y="588" textLength="17.7" lengthAdjust="spacingAndGlyphs" fill="#a4b3e4" fill-opacity="0.85">m</text><text x="676.7" y="588" textLength="13.2" lengthAdjust="spacingAndGlyphs" fill="#a4b3e4" fill-opacity="0.85">e</text><text x="692.4" y="588" textLength="13.2" lengthAdjust="spacingAndGlyphs" fill="#a4b3e4" fill-opacity="0.85">h</text><text x="708.2" y="588" textLength="13.2" lengthAdjust="spacingAndGlyphs" fill="#a4b3e4" fill-opacity="0.85">a</text><text x="723.9" y="588" textLength="8.5" lengthAdjust="spacingAndGlyphs" fill="#a4b3e4" fill-opacity="0.85">r</text><text x="734.4" y="588" textLength="13.8" lengthAdjust="spacingAndGlyphs" fill="#a4b3e4" fill-opacity="0.85">d</text><text x="749.4" y="588" textLength="16.4" lengthAdjust="spacingAndGlyphs" fill="#a4b3e4" fill-opacity="0.85">w</text><text x="767.7" y="588" textLength="11.8" lengthAdjust="spacingAndGlyphs" fill="#a4b3e4" fill-opacity="0.85">a</text><text x="781.8" y="588" textLength="7.6" lengthAdjust="spacingAndGlyphs" fill="#a4b3e4" fill-opacity="0.85">r</text><text x="790.8" y="588" textLength="12.8" lengthAdjust="spacingAndGlyphs" fill="#a4b3e4" fill-opacity="0.85">e</text><text x="805.4" y="588" textLength="1.9" lengthAdjust="spacingAndGlyphs" fill="#a4b3e4" fill-opacity="0.85">.</text><text x="810.7" y="588" textLength="3.4" lengthAdjust="spacingAndGlyphs" fill="#a4b3e4" fill-opacity="0.85">i</text><text x="815.9" y="588" textLength="6.6" lengthAdjust="spacingAndGlyphs" fill="#a4b3e4" fill-opacity="0.85">t</text></g>
</g>
</svg>
<div class="t" style="top:580.86px;font-size:11px;line-height:11px;color:#000;letter-spacing:-0.099px;left:734.95px;width:75px;text-align:center;opacity:0.75;"><u>D</u>one</div>
</body></html>
